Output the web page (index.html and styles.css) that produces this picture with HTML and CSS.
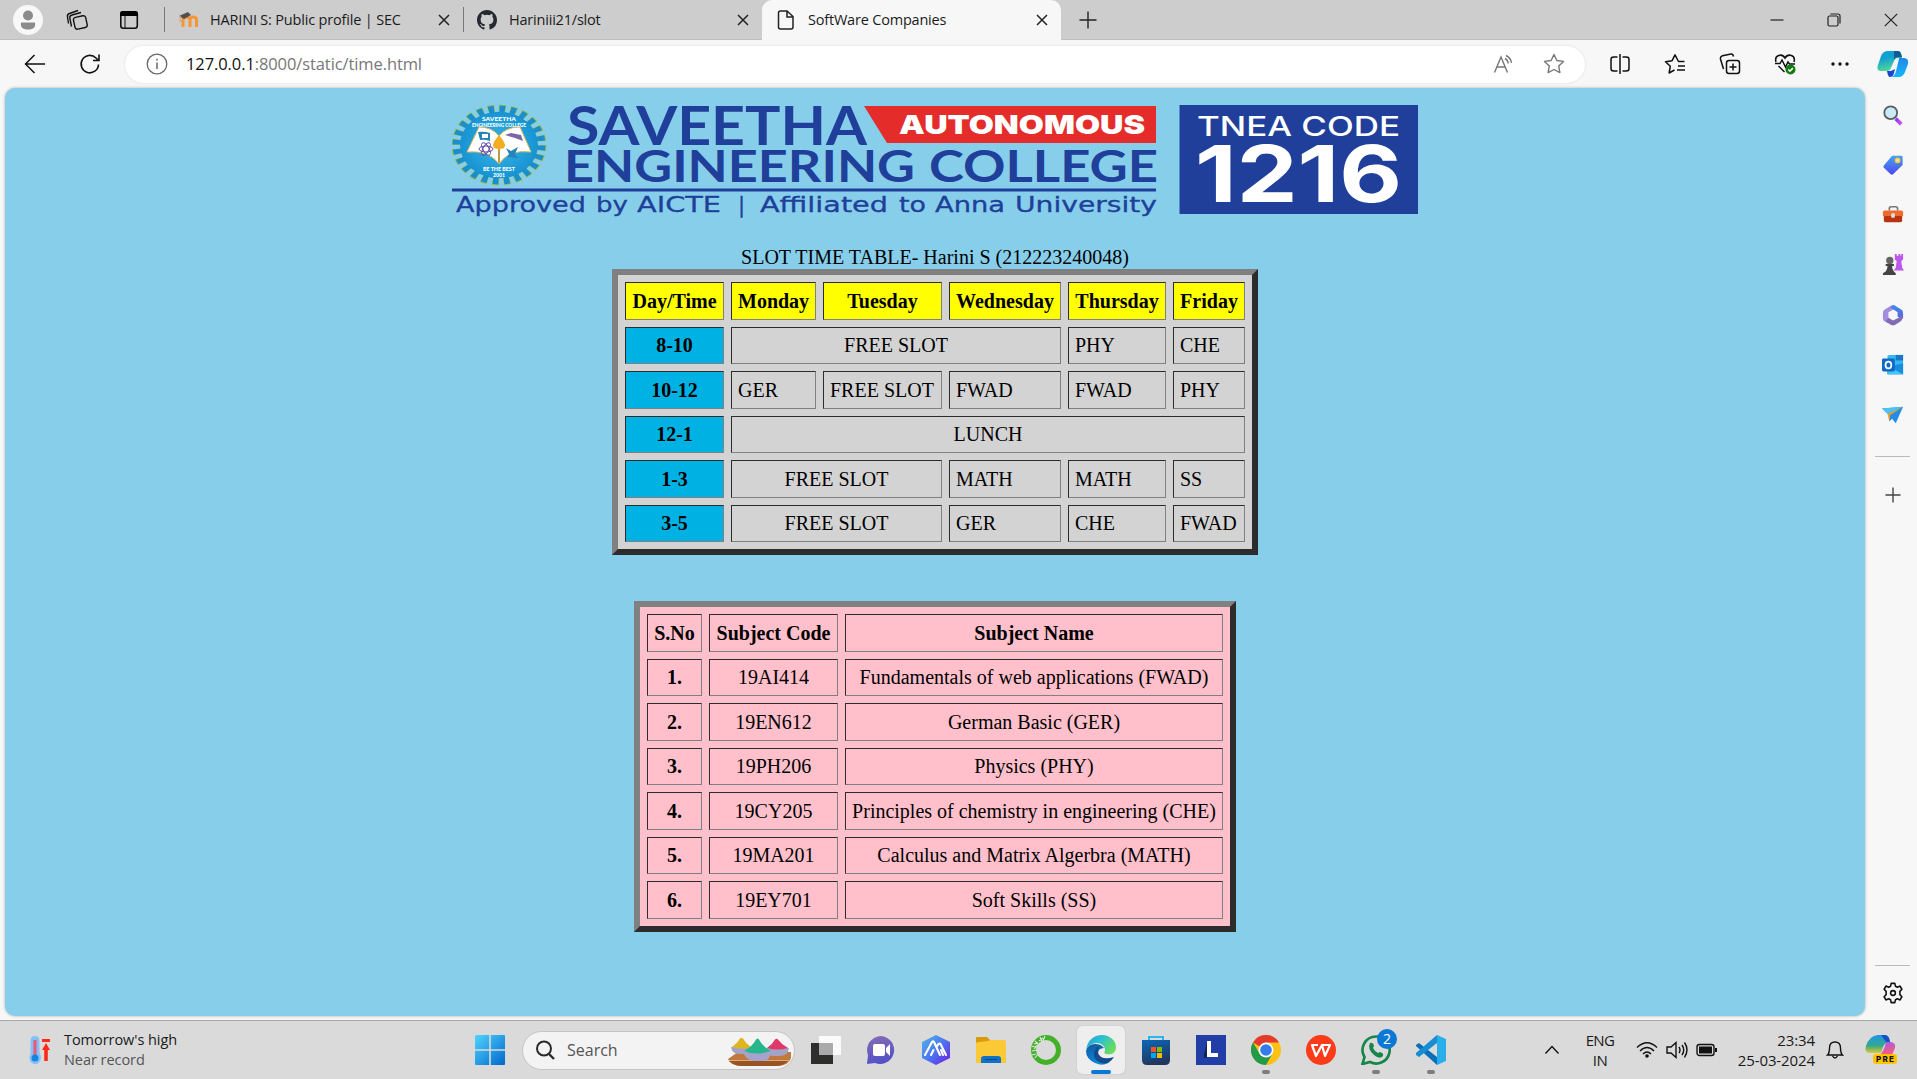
FILE: index.html
```html
<!DOCTYPE html>
<html lang="en">
<head>
<meta charset="utf-8">
<title>SoftWare Companies</title>
<link rel="stylesheet" href="styles.css">
</head>
<body>
<div class="desktop">
<header class="tabbar">
  <div class="tools">
    <svg class="avatar" viewBox="0 0 30 30"><circle cx="15" cy="15" r="15" fill="#f8f8f8"/><circle cx="15" cy="10.5" r="5" fill="#8b8b8b"/><path d="M8 17.5h14c1 6-3 7-7 7s-8-1-7-7z" fill="#8b8b8b"/></svg>
    <svg class="i22" viewBox="0 0 22 22" fill="none" stroke="#111" stroke-width="1.4"><rect x="8" y="7.500" width="12.500" height="12" rx="2.500" transform="rotate(-12 14 13)"/><path d="M5.500 17.500 3.800 9Q3.500 6.500 6 6l9-2.500M2.500 14.500 1.500 8Q1 5 3.500 4.500L12 1.500"/></svg>
    <svg class="i22" viewBox="0 0 22 22"><rect x="2.800" y="2.800" width="16.500" height="16.500" rx="2.500" fill="none" stroke="#111" stroke-width="1.600"/><path d="M2 7V5Q2 2 5 2h12q3 0 3 3v2z"/><path d="M7 7v12" stroke="#111"/></svg>
  </div>
  <div class="tab">
    <svg class="fav" viewBox="0 0 20 20"><path d="M5 17V10q0-3 3.500-3t3.500 3v7M12 10q0-3 3.300-3T18.500 10v7" fill="none" stroke="#f79535" stroke-width="3"/><path d="M1 6 10 2l3 3-7 4z" fill="#51504f"/><path d="M2.500 6 2 12" stroke="#d99b67"/></svg>
    <span class="t1">HARINI S: Public profile | SEC</span>
    <svg class="x" viewBox="0 0 12 12"><path d="M1 1l10 10M11 1 1 11"/></svg>
  </div>
  <div class="tab">
    <svg class="fav" viewBox="0 0 16 16" fill="#24292f"><path d="M8 0C3.580 0 0 3.580 0 8c0 3.540 2.290 6.530 5.470 7.590.4.070.55-.17.55-.38 0-.19-.01-.82-.01-1.490-2.010.37-2.530-.49-2.690-.94-.09-.23-.48-.94-.82-1.130-.28-.15-.68-.52-.01-.53.63-.01 1.080.58 1.230.82.72 1.210 1.870.87 2.330.66.07-.52.28-.87.51-1.070-1.780-.2-3.640-.89-3.640-3.950 0-.87.31-1.590.82-2.150-.08-.2-.36-1.020.08-2.120 0 0 .67-.21 2.200.82a7.500 7.500 0 0 1 4 0c1.530-1.040 2.200-.82 2.200-.82.44 1.100.16 1.920.08 2.120.51.56.82 1.270.82 2.150 0 3.070-1.870 3.750-3.650 3.950.29.25.54.73.54 1.480 0 1.070-.01 1.930-.01 2.200 0 .21.150.46.55.38A8 8 0 0 0 16 8c0-4.420-3.580-8-8-8z"/></svg>
    <span class="t2">Hariniii21/slot</span>
    <svg class="x" viewBox="0 0 12 12"><path d="M1 1l10 10M11 1 1 11"/></svg>
  </div>
  <div class="tab active">
    <svg class="fav" viewBox="0 0 20 20" fill="none" stroke="#222" stroke-width="1.500"><path d="M4.500 1h6.500l6 5.500V17q0 2-2 2H4.500q-2 0-2-2V3q0-2 2-2zM11 1v6h6"/></svg>
    <span class="t3">SoftWare Companies</span>
    <svg class="x" viewBox="0 0 12 12"><path d="M1 1l10 10M11 1 1 11"/></svg>
  </div>
  <svg class="newtab" viewBox="0 0 18 18"><path d="M9 .5v17M.5 9h17" stroke="#222" stroke-width="1.400"/></svg>
  <div class="winbtns">
    <svg viewBox="0 0 14 14"><path d="M.5 7h13"/></svg>
    <svg viewBox="0 0 14 14"><rect x="1" y="3" width="10" height="10" rx="1.500"/><path d="M3.500 1H11q2 0 2 2v7.500"/></svg>
    <svg viewBox="0 0 14 14"><path d="M.8.8l12.400 12.400M13.200.8.8 13.200"/></svg>
  </div>
</header>

<nav class="toolbar">
  <svg class="back" viewBox="0 0 22 22"><path d="M21 11H2M10.500 2 1.500 11l9 9"/></svg>
  <svg class="reload" viewBox="0 0 22 22"><path d="M19.500 11.500a8.700 8.700 0 1 1-2.500-6.500l2.300 2.300M20 1.500v6h-6"/></svg>
  <div class="address">
    <svg class="info" viewBox="0 0 22 22"><circle cx="11" cy="11" r="9.800" fill="none" stroke="#666" stroke-width="1.300"/><path d="M11 9.500V16M11 5.800v1.600" stroke="#666" stroke-width="1.500"/></svg>
    <span class="url"><b>127.0.0.1</b>:8000/static/time.html</span>
    <svg class="i22" viewBox="0 0 22 22" fill="none" stroke="#777" stroke-width="1.400"><path d="M1.500 19.500 8 4l6.500 15.500M4 14h8M12 5.500q3 1.500 3.200 5M13 2.500q5 2.500 5.500 7.500"/></svg>
    <svg class="i22" viewBox="0 0 22 22" fill="none" stroke="#777" stroke-width="1.400"><path d="m11 1.500 2.900 6 6.600.9-4.800 4.600 1.200 6.600L11 16.500l-5.900 3.100 1.200-6.600L1.500 8.400l6.600-.9z" stroke-linejoin="round"/></svg>
  </div>
  <div class="actions">
    <svg viewBox="0 0 22 22"><path d="M8.500 4H4.500Q2 4 2 6.500v9Q2 18 4.500 18h4M13.500 4h4q2.500 0 2.500 2.500v9q0 2.500-2.500 2.500h-4M11 1v20"/></svg>
    <svg viewBox="0 0 22 22"><path d="M20.500 8.500h-6L11 1.800 8.100 7.700l-6.600 1 4.800 4.600L5.100 20l5.400-3M14 13h7M13 17h8" stroke-linejoin="round"/></svg>
    <svg viewBox="0 0 22 22"><rect x="7.500" y="7.500" width="13" height="13" rx="2.500"/><path d="M14 10.500v7M10.500 14h7M4.500 16 1.500 6q-.5-2.500 2-3.300L12 1q2-.2 2.500 2.500"/></svg>
    <svg viewBox="0 0 22 22"><path d="M2 9C0 2 8 0 11 5c3-5 11-3 9 4M1 10.500h5l2-3.500 3.500 7 2.500-5 1.500 2H21M4.500 13l6 6"/><circle cx="16.500" cy="16.500" r="5" fill="#107c10" stroke="none"/><path d="m14.300 16.500 1.600 1.600 3-3" stroke="#fff"/></svg>
    <svg viewBox="0 0 22 22"><g fill="#111" stroke="none"><circle cx="4" cy="11" r="1.700"/><circle cx="11" cy="11" r="1.700"/><circle cx="18" cy="11" r="1.700"/></g></svg>
  </div>
  <svg class="copilot" viewBox="0 0 32 30">
    <defs><linearGradient id="ca" x2=".3" y2="1"><stop stop-color="#0aa3d8"/><stop offset=".4" stop-color="#12a0cf"/><stop offset="1" stop-color="#50d69a"/></linearGradient><linearGradient id="cb" x2="0" y2="1"><stop stop-color="#2286e8"/><stop offset="1" stop-color="#14b8fb"/></linearGradient></defs>
    <path d="M14 2h7q3 0 3 4l1 3h-4q-3 0-4 3l-3 7q-1 3-4 3H4q-5 0-3-6L4 7q2-5 7-5z" fill="url(#ca)"/><path d="M17 2h4q3 0 4 6h-4q-3 0-4 3z" fill="#125c91"/><path d="M22 9h5q5 0 4 6l-3 8q-2 5-6 5h-8q4-1 5-6l2-8q1-4 1-5z" fill="url(#cb)"/><path d="M10 22h4l4-2-1 4q-1 4-4 4-2 0-3-6z" fill="#1645d8"/>
  </svg>
</nav>

<main class="page">
  <svg class="banner" viewBox="0 0 970 116">
    <defs><radialGradient id="gb"><stop stop-color="#39b7e8"/><stop offset="1" stop-color="#1793d2"/></radialGradient></defs>
    <g transform="translate(47 41) scale(1 .85)"><circle r="41" fill="none" stroke="#a1bd4d" stroke-width="13" pathLength="48" stroke-dasharray="1.200 .8"/><circle r="41" fill="none" stroke="#188fcf" stroke-width="11" pathLength="48" stroke-dasharray="1 1" stroke-dashoffset="-.1"/><circle r="39" fill="url(#gb)"/></g>
    <path d="M27 23q13 0 20 9 7-9 21-9l11 25q-22-3-32 12-10-14-32-12z" fill="#fff" stroke="#d9ba61"/>
    <g fill="none" stroke="#6048a5"><ellipse cx="34" cy="45" rx="7" ry="3"/><ellipse cx="34" cy="45" rx="7" ry="3" transform="rotate(60 34 45)"/><ellipse cx="34" cy="45" rx="7" ry="3" transform="rotate(120 34 45)"/></g>
    <path d="M26 28q6-1 12 1v8q-6-2-10-1zM54 44l5 3 7-4-3 7 3 4-11-1 2-3z" fill="#2585ba"/><path d="M30 30h6v4h-6z" fill="#fff"/><path d="m53 31 6-2 10 2 2 6-8-3z" fill="#7b67a8"/>
    <path d="M47 31q12 14 0 14-12 0 0-14z" fill="#f4ad20"/><path d="M47 45v14" stroke="#bd9c42" stroke-width="2"/>
    <g font-family="Lato, sans-serif" font-weight="900" fill="#fff"><text x="30" y="17" font-size="6" textLength="34" lengthAdjust="spacingAndGlyphs">SAVEETHA</text><text x="20" y="22.500" font-size="5" textLength="54" lengthAdjust="spacingAndGlyphs">ENGINEERING COLLEGE</text><text x="31" y="67" font-size="5" textLength="32" lengthAdjust="spacingAndGlyphs">BE THE BEST</text><text x="41" y="72.500" font-size="5" textLength="12" lengthAdjust="spacingAndGlyphs">2001</text></g>
    <g font-family="Lato, sans-serif" font-weight="700" fill="#203f9a"><text x="115" y="40.500" font-size="53" textLength="300" lengthAdjust="spacingAndGlyphs">SAVEETHA</text><text x="112" y="77.500" font-size="43" textLength="351" lengthAdjust="spacingAndGlyphs">ENGINEERING</text><text x="477" y="77.500" font-size="43" textLength="229" lengthAdjust="spacingAndGlyphs">COLLEGE</text></g>
    <path d="M412 2h292v37H435z" fill="#e42d2b"/>
    <text x="447" y="29.500" font-family="Inter, sans-serif" font-weight="900" font-size="26" fill="#fff" textLength="246" lengthAdjust="spacingAndGlyphs">AUTONOMOUS</text>
    <path d="M0 84.500h704v3H0z" fill="#203f9a"/>
    <g class="tagline"><text x="4" y="108" textLength="130" lengthAdjust="spacingAndGlyphs">Approved</text><text x="144" y="108" textLength="32" lengthAdjust="spacingAndGlyphs">by</text><text x="185" y="108" textLength="84" lengthAdjust="spacingAndGlyphs">AICTE</text><text x="286" y="108">|</text><text x="308" y="108" textLength="128" lengthAdjust="spacingAndGlyphs">Affiliated</text><text x="447" y="108" textLength="27" lengthAdjust="spacingAndGlyphs">to</text><text x="483" y="108" textLength="70" lengthAdjust="spacingAndGlyphs">Anna</text><text x="563" y="108" textLength="142" lengthAdjust="spacingAndGlyphs">University</text></g>
    <path d="M727.500 1H966v109H727.500z" fill="#203f9a"/>
    <g font-family="Inter, sans-serif" fill="#fff"><text x="745" y="31.500" font-size="26.500" font-weight="500" textLength="203" lengthAdjust="spacingAndGlyphs">TNEA CODE</text><text x="743" y="98" font-size="79" font-weight="700" textLength="207" lengthAdjust="spacingAndGlyphs">1216</text></g>
  </svg>

  <table class="slots">
    <caption>SLOT TIME TABLE- Harini S (212223240048)</caption>
    <colgroup><col class="c99"><col class="c85"><col class="c119"><col class="c112"><col class="c98"><col class="c72"></colgroup>
    <tr class="days"><th>Day/Time</th><th>Monday</th><th>Tuesday</th><th>Wednesday</th><th>Thursday</th><th>Friday</th></tr>
    <tr><th>8-10</th><td class="mid" colspan="3">FREE SLOT</td><td>PHY</td><td>CHE</td></tr>
    <tr><th>10-12</th><td>GER</td><td>FREE SLOT</td><td>FWAD</td><td>FWAD</td><td>PHY</td></tr>
    <tr><th>12-1</th><td class="mid" colspan="5">LUNCH</td></tr>
    <tr><th>1-3</th><td class="mid" colspan="2">FREE SLOT</td><td>MATH</td><td>MATH</td><td>SS</td></tr>
    <tr><th>3-5</th><td class="mid" colspan="2">FREE SLOT</td><td>GER</td><td>CHE</td><td>FWAD</td></tr>
  </table>

  <table class="subjects">
    <colgroup><col class="c55"><col class="c129"><col class="c378"></colgroup>
    <tr><th>S.No</th><th>Subject Code</th><th>Subject Name</th></tr>
    <tr><th>1.</th><td>19AI414</td><td>Fundamentals of web applications (FWAD)</td></tr>
    <tr><th>2.</th><td>19EN612</td><td>German Basic (GER)</td></tr>
    <tr><th>3.</th><td>19PH206</td><td>Physics (PHY)</td></tr>
    <tr><th>4.</th><td>19CY205</td><td>Principles of chemistry in engineering (CHE)</td></tr>
    <tr><th>5.</th><td>19MA201</td><td>Calculus and Matrix Algerbra (MATH)</td></tr>
    <tr><th>6.</th><td>19EY701</td><td>Soft Skills (SS)</td></tr>
  </table>
</main>

<aside class="sidebar">
  <svg viewBox="0 0 24 24"><defs><linearGradient id="pk" x2="1"><stop stop-color="#7b3ff2"/><stop offset="1" stop-color="#e14bf5"/></linearGradient></defs><path d="m15 16 6 6" stroke="url(#pk)" stroke-width="4"/><circle cx="9.500" cy="9.500" r="7" fill="#c8e9fb" stroke="#5d5d5d" stroke-width="2"/></svg>
  <svg viewBox="0 0 24 24"><defs><linearGradient id="tg" x2="0" y2="1"><stop stop-color="#49a1f0"/><stop offset="1" stop-color="#4c49ee"/></linearGradient></defs><path d="M11 2h10q1.500 0 1.500 1.500V12L12 22q-1 1-2.500 0L2 15q-1-1 0-2.500z" fill="url(#tg)"/><circle cx="17" cy="7" r="2.300" fill="#dce6ff" stroke="#f7cc28" stroke-width="1.600"/></svg>
  <svg viewBox="0 0 24 24"><path d="M8 7V5q0-2 2-2h5q2 0 2 2v2" fill="none" stroke="#777" stroke-width="1.800"/><path d="M3 7h18q2 0 2 2v4H1V9q0-2 2-2z" fill="#ec6b2d"/><path d="M2 13h20v5q0 2-2 2H4q-2 0-2-2z" fill="#b7340f"/><rect x="10" y="10" width="4" height="5" rx="1" fill="#dedede"/></svg>
  <svg viewBox="0 0 24 24"><path d="M14 0h2v2h2V0h2v2h1V0h2v6l-2 2 1 7 2 3H13l2-3 1-7-2-2z" fill="#be57ee"/><circle cx="8.500" cy="7" r="4" fill="#666"/><path d="M4 11h9v2h-2q0 4 2 6l2 2v2H1v-2l3-2q2-2 2-6H4z" fill="#444"/></svg>
  <svg viewBox="0 0 24 24"><defs><linearGradient id="mo" x2="0" y2="1"><stop stop-color="#3d8cec"/><stop offset="1" stop-color="#6562d7"/></linearGradient></defs><path d="M11 1 3 6q-2 1-2 4v6q0 2 2 3l4 2V9l9-5-3-3z" fill="#a28cdd"/><path d="m13 1 8 5q2 1 2 4v6l-6-2V9l-6-4-2-1z" fill="url(#mo)"/><path d="m7 15 5 3 10-5v3q0 2-2 3l-6 4q-2 1-4 0l-6-4z" fill="#806bb9"/><circle cx="12" cy="12" r="4" fill="#f7f7f7"/></svg>
  <svg viewBox="0 0 24 24"><path d="M8 1h14q1 0 1 1v20H6V2z" fill="#35b8f1"/><path d="M15 1h8v6h-8z" fill="#1b75c9"/><path d="m6 14 17-4v12H6z" fill="#168de2"/><path d="m6 13 17 9H7z" fill="#45c6f4"/><rect x="0" y="5" width="14" height="14" rx="1.500" fill="#0e69c7"/><ellipse cx="7" cy="12" rx="3.200" ry="3.700" fill="none" stroke="#fff" stroke-width="1.900"/></svg>
  <svg viewBox="0 0 24 24"><path d="m0 5 23-2-8 18-4-5-3 3-1-8z" fill="#258be8"/><path d="M0 5 23 3 6 11z" fill="#4cc3f3"/><path d="M23 3 6 11l2 8 1-7z" fill="#f1a328"/></svg>
  <hr>
  <svg class="add" viewBox="0 0 18 18"><path d="M9 1.500v15M1.500 9h15" stroke="#444" stroke-width="1.400"/></svg>
  <div class="grow"></div>
  <hr>
  <svg class="gear" viewBox="0 0 24 24" fill="none" stroke="#111" stroke-width="1.700"><path d="m10 1.500-.7 3.200-2 1-3-1.300-2 3.500 2.200 2.300v3.600l-2.200 2.300 2 3.500 3-1.300 2 1 .7 3.200h4l.7-3.200 2-1 3 1.300 2-3.500-2.200-2.300v-3.600l2.200-2.300-2-3.500-3 1.300-2-1-.7-3.200z" stroke-linejoin="round"/><circle cx="12" cy="12" r="2.600"/></svg>
</aside>

<footer class="taskbar">
  <div class="weather">
    <svg viewBox="0 0 24 30"><path d="M2.500 6q0-5 4.500-5t4.500 5v12q2 2 1 7-2 5-6 4-5-1-5-6 0-2 1-4z" fill="#83c2f8"/><path d="M7 5v17" stroke="#e85c78" stroke-width="3.200"/><circle cx="7" cy="23" r="3.500" fill="#1187dd"/><path d="M14 5.500h8" stroke="#ff2a18" stroke-width="3"/><path d="m18 8 4 7h-2.200v11h-3.600V15H14z" fill="#ff2a18"/></svg>
    <div><p>Tomorrow's high</p><p class="dim">Near record</p></div>
  </div>
  <svg class="start" viewBox="0 0 30 30"><defs><linearGradient id="wn" x2="1" y2="1"><stop stop-color="#4fd3ff"/><stop offset="1" stop-color="#0068cb"/></linearGradient></defs><path d="M1 0h13.200v14.200H0V1zM15.800 0H29q1 0 1 1v13.200H15.800zM0 15.800h14.200V30H1q-1 0-1-1zM15.800 15.800H30V29q0 1-1 1H15.800z" fill="url(#wn)"/></svg>
  <div class="search">
    <svg class="lens" viewBox="0 0 20 20"><circle cx="9" cy="8.500" r="7" fill="none" stroke="#2b2b2b" stroke-width="2"/><path d="m14 14 5 5" stroke="#2b2b2b" stroke-width="2.400"/></svg>
    <span>Search</span>
    <svg class="bowls" viewBox="0 0 64 30"><path d="M0 22 10 15h53v6q-2 7-13 8H14Q3 29 0 22z" fill="#bf783d"/><path d="M1 24h59q-5 5-12 5H14q-8 0-13-5z" fill="#975425"/><path d="M1 23.500h60" stroke="#e7ab72"/><path d="M3 10h21q0 7-8 7H11q-7 0-8-7zM38 11h23q-1 8-9 8h-6q-7 0-8-8z" fill="#a4a3c6"/><path d="M4 10Q9 7 12 1.500q1.500-1.500 3 0Q18 7 23 10q-8 3-19 0z" fill="#dfb51f"/><path d="M39 11q5-3 8-8.500 1.500-1.500 3 0Q54 8 60 11q-11 3-21 0z" fill="#e0386b"/><path d="M15 14h29q-2 10-10 10h-8q-9-1-11-10z" fill="#a5a3cd"/><path d="M16 14q8-4 12-11.500 1.500-2 3 0Q35 10 43 14q-14 5-27 0z" fill="#27b68b"/></svg>
  </div>
  <div class="apps">
    <div><svg viewBox="0 0 30 30"><path d="M0 8h22v21H0z" fill="#2e2e2d"/><path d="M8 1h22v19H8z" fill="#fff" opacity=".85"/><path d="M8 8h14v12H8z" fill="#aaa"/></svg></div>
    <div><svg viewBox="0 0 30 30"><defs><linearGradient id="ch" x2=".3" y2="1"><stop stop-color="#886db6"/><stop offset="1" stop-color="#5452c6"/></linearGradient></defs><path d="M15 1a14 14 0 1 1-6 27L1 29l1-9A14 14 0 0 1 15 1z" fill="url(#ch)"/><rect x="7" y="9" width="12" height="12" rx="2" fill="#fff"/><path d="m20 13 4-4v12l-4-4z" fill="#fff"/></svg></div>
    <div><svg viewBox="0 0 30 30"><defs><linearGradient id="hx" x2="1" y2="1"><stop stop-color="#55b4e8"/><stop offset=".5" stop-color="#4a77ef"/><stop offset="1" stop-color="#701be3"/></linearGradient></defs><path d="m15 0 14 7v16l-14 7L1 23V7z" fill="url(#hx)"/><path d="M4 20 11 7q1-1.500 2 0l6 13M10 20l2.500-5M16 11l1.500-2q1-1 2 0L25 20M20 15l2 5" fill="none" stroke="#fff" stroke-width="2.100" stroke-linecap="round" stroke-linejoin="round"/></svg></div>
    <div><svg viewBox="0 0 30 30"><path d="M0 3q0-1 1-1h10l3 3v4H0z" fill="#d89a08"/><path d="M0 9q0-2 3-2l9-1 2-1h14q2 0 2 2v21H0z" fill="#fbc936"/><path d="M5 28v-4q0-3 3-3h14q3 0 3 3v4z" fill="#0f72c6"/><path d="M9 24.500h12" stroke="#074a88"/></svg></div>
    <div><svg viewBox="0 0 30 30"><circle cx="15" cy="15" r="12.500" fill="none" stroke="#42b029" stroke-width="5"/><path d="M4 23 7 19M1 16l5-1M1 11l5 2M4 6l4 4M9 2l2 5M5 19l-4 1M3 14l3-4M7 8 3 9M8 6l4-3M14 1l-2 5" stroke="#dce8da" stroke-width="1.200"/></svg></div>
    <div class="current"><svg viewBox="0 0 30 30"><defs><linearGradient id="ed" x2="1" y2=".5"><stop stop-color="#259fd9"/><stop offset=".5" stop-color="#2dc0d1"/><stop offset="1" stop-color="#68dc5e"/></linearGradient><linearGradient id="ee" x2=".3" y2="1"><stop stop-color="#14589c"/><stop offset="1" stop-color="#0889e2"/></linearGradient></defs><path d="M0 16C1 5 8 0 16 0c8 0 14 6 14 12 0 7-6 8-10 7-3-1-1-2-1-4 0-4-4-7-8-7-6 0-10 4-11 8z" fill="url(#ed)"/><path d="M0 16q2-7 9-7 6 0 9 4-6 0-6 6 1 8 12 8Q17 32 9 28 0 24 0 16z" fill="url(#ee)"/><path d="M14 11q-3 3-2 7 3 8 16 4-5 8-13 6-8-3-7-10 1-6 6-7z" fill="#174a88"/></svg></div>
    <div><svg viewBox="0 0 30 30"><defs><linearGradient id="st" x2=".3" y2="1"><stop stop-color="#0b68b7"/><stop offset="1" stop-color="#21365e"/></linearGradient></defs><path d="M8 7V2h14v5" fill="none" stroke="#28b8ef" stroke-width="2"/><path d="M1 5h28v20q0 5-5 5H6q-5 0-5-5z" fill="url(#st)"/><path d="M10 12h5v5h-5z" fill="#f35325"/><path d="M16 12h5v5h-5z" fill="#81bc06"/><path d="M10 18h5v5h-5z" fill="#05a6f0"/><path d="M16 18h5v5h-5z" fill="#ffba08"/></svg></div>
    <div><svg viewBox="0 0 30 30"><path d="M0 0h30v30H0z" fill="#203da8"/><path d="m11 7-3 12v4l5-1z" fill="#122552"/><path d="M11 6h4v12h7v4H11z" fill="#fff"/></svg></div>
    <div class="run"><svg viewBox="0 0 30 30"><circle cx="15" cy="15" r="15" fill="#fbc116"/><path d="M15 15 2 7.500A15 15 0 0 1 28 7.500H15z" fill="#e33b2e"/><path d="M2 7.500A15 15 0 0 0 15 30l6.500-11.500L15 15 8.500 18.500z" fill="#229a48"/><circle cx="15" cy="15" r="7.500" fill="#fff"/><circle cx="15" cy="15" r="5.800" fill="#347ce9"/></svg></div>
    <div><svg viewBox="0 0 30 30"><circle cx="15" cy="15" r="15" fill="#fc3c18"/><path d="M12 10H6l4 11 6-11 3 11 5-11h-7l-2 2" fill="none" stroke="#fff" stroke-width="2.200" stroke-linejoin="round"/></svg></div>
    <div class="run wa"><svg viewBox="0 0 30 30"><path d="M15 1.500a13.500 13.500 0 1 1-6 25.500l-7.500 2 2-7A13.500 13.500 0 0 1 15 1.500z" fill="none" stroke="#17864c" stroke-width="2.700"/><path d="M9 8q3-1 4 3l-1 2q2 4 5 5l2-1q4 1 3 4-3 4-9-1-7-6-4-12z" fill="#17864c"/></svg><b>2</b></div>
    <div class="run"><svg viewBox="0 0 30 30"><path d="m21 0 9 4v22l-9 4z" fill="#2aaeea"/><path d="m0 10 3-2 18 14v8L0 11z" fill="#0870b8"/><path d="m0 20 3 2L21 8V0L0 18z" fill="#178ed4"/></svg></div>
  </div>
  <div class="tray">
    <svg class="chev" viewBox="0 0 16 10"><path d="m1.500 8.500 6.500-7 6.500 7"/></svg>
    <div class="lang"><p>ENG</p><p>IN</p></div>
    <svg class="net" viewBox="0 0 22 20"><path d="M1 7.500q10-9.500 20 0M4 11q7-7 14 0M7 14q4-4 8 0"/><circle cx="11" cy="16" r="1.800" fill="#111" stroke="none"/></svg>
    <svg class="net" viewBox="0 0 22 20"><path d="M1 7h4l5-4.500v15L5 13H1zM13 7q2 3 0 6M16 5q3.500 5 0 10M18.500 2.500q5 7 0 15"/></svg>
    <svg class="net" viewBox="0 0 22 20"><rect x="1" y="4.500" width="17" height="11" rx="2.500"/><path d="M3 6.500h13v7H3z" fill="#111" stroke="none"/><path d="M20 8v4" stroke-width="2"/></svg>
    <div class="clock"><p>23:34</p><p>25-03-2024</p></div>
    <svg class="bell" viewBox="0 0 18 20"><path d="M1.500 15q2-2 2-7 0-6 5.500-6t5.500 6q0 5 2 7zM6.500 16q2.500 4 5 0"/></svg>
    <svg class="pre" viewBox="0 0 32 32"><defs><linearGradient id="pa" x2="0" y2="1"><stop stop-color="#1c95ec"/><stop offset=".6" stop-color="#35a98b"/><stop offset="1" stop-color="#e0c92a"/></linearGradient><linearGradient id="pb" x2=".2" y2="1"><stop stop-color="#a55bea"/><stop offset="1" stop-color="#fa5b7c"/></linearGradient></defs><path d="M13 1h7q4 0 5 7-5 0-7 5l-2 6H5q-6 0-4-7 3-10 12-11z" fill="url(#pa)"/><path d="M16 1h4q4 0 5 7h-4z" fill="#1751c9"/><path d="M21 8h5q5 1 4 6l-3 7H15q4-4 6-13z" fill="url(#pb)"/><rect x="8" y="20" width="24" height="10" rx="3" fill="#ffc400"/><text x="11" y="28" font-family="Inter, sans-serif" font-size="8" font-weight="800" textLength="18">PRE</text></svg>
  </div>
</footer>
</div>
</body>
</html>
```
FILE: styles.css
```css
* { box-sizing: border-box; }
body { margin: 0; overflow: hidden; font-family: "Open Sans", sans-serif; color: #1b1b1b; }
svg { display: block; flex: none; }
p { margin: 0; }
.desktop {
  width: 1917px; height: 1079px; background: #f7f7f7;
  display: grid; grid-template: 40px 48px 928px 4px 59px / 1865px 52px;
}
.tabbar, .toolbar, .taskbar { grid-column: 1 / 3; display: flex; align-items: center; }

/* Tab strip */
.tabbar { background: #cdcdcd; border-bottom: 1px solid #c0c0c0; height: 40px; }
.tools { width: 164px; padding-left: 13px; display: flex; align-items: center; gap: 23px; }
.avatar { width: 30px; height: 30px; }
.tools .i22:nth-child(3) { margin-left: 7px; }
.i22 { width: 22px; height: 22px; }
.tab {
  width: 299px; height: 40px; padding: 0 13px; display: flex; align-items: center;
  font-size: 14.5px; white-space: nowrap;
}
.tab::before { content: ""; width: 1px; height: 25px; background: #777; margin-left: -13px; }
.tab .fav { margin-left: 13px; }
.tab span { margin-left: 12px; }
.tab .x { margin-left: auto; stroke: #222; }
.tab.active { background: #f7f7f7; border-radius: 10px 10px 0 0; }
.tab.active::before { background: none; }
.fav { width: 20px; height: 20px; }
.x { width: 12px; height: 12px; stroke-width: 1.5; }
.t1 { letter-spacing: -.18px; }
.t2 { letter-spacing: -.2px; }
.t3 { letter-spacing: -.2px; }
.newtab { width: 18px; height: 18px; margin-left: 18px; }
.winbtns { margin-left: auto; margin-right: 19px; display: flex; gap: 43px; }
.winbtns svg { width: 14px; height: 14px; fill: none; stroke: #222; stroke-width: 1.2; }

/* Address row */
.toolbar { height: 48px; padding: 0 8px 0 24px; fill: none; stroke: #111; }
.back { width: 22px; height: 22px; stroke-width: 1.5; }
.reload { width: 22px; height: 22px; margin-left: 33px; stroke-width: 1.6; }
.address {
  margin-left: 24px; width: 1460px; height: 37px; border-radius: 19px; background: #fff;
  box-shadow: 0 0 3px #ddd; display: flex; align-items: center; padding: 0 20px 0 21px; stroke: none;
}
.info { width: 22px; height: 22px; }
.url { margin: 0 auto 0 18px; padding-bottom: 2px; font-size: 16.5px; letter-spacing: -.1px; color: #777; }
.url b { font-weight: 400; color: #111; }
.address .i22 + .i22 { margin-left: 28px; }
.actions { margin-left: 24px; display: flex; gap: 33px; }
.actions svg { width: 22px; height: 22px; stroke-width: 1.5; }
.copilot { width: 32px; height: 30px; margin-left: auto; stroke: none; }

/* Web page */
.page {
  grid-row: 3; grid-column: 1;
  margin-left: 5px; background: skyblue; border-radius: 10px; overflow: hidden;
  box-shadow: 0 0 3px #aaa; padding-top: 16px; display: flex; flex-direction: column; align-items: center;
  font: 20px/23px "Liberation Serif", serif; color: #000;
}
.banner { width: 970px; height: 116px; margin-left: 4px; }
.tagline { font: 21px "DejaVu Sans", sans-serif; fill: #203f9a; stroke: #203f9a; stroke-width: .3px; }
table {
  table-layout: fixed; border: 6px solid; border-color: #808080 #2c2c2c #2c2c2c #808080;
  border-spacing: 7px; border-collapse: separate; white-space: nowrap;
}
caption { height: 23px; }
th, td { padding: 0 6px; border: 1px solid; border-color: #2c2c2c #808080 #808080 #2c2c2c; }
tr { height: 37px; }
tr:nth-child(odd) { height: 38px; }
.slots { width: 646px; background: lightgray; margin-top: 26px; }
.slots th { background: #00b1e3; }
.slots .days th { background: yellow; }
.mid, .subjects td { text-align: center; }
.subjects { width: 602px; background: pink; margin-top: 46px; }
.c99 { width: 99px; } .c85 { width: 85px; } .c119 { width: 119px; } .c112 { width: 112px; }
.c98 { width: 98px; } .c72 { width: 72px; } .c55 { width: 55px; } .c129 { width: 129px; } .c378 { width: 378px; }

/* Edge sidebar */
.sidebar { grid-row: 3; grid-column: 2; display: flex; flex-direction: column; align-items: center; padding: 16px 0 12px 3px; }
.sidebar svg { width: 22px; height: 22px; margin-bottom: 28px; }
.sidebar hr { width: 35px; height: 1px; border: 0; background: #bbb; margin: 2px 0 29px; flex: none; }
.sidebar .add { width: 18px; height: 18px; margin: 0; }
.grow { flex: 1; }
.sidebar hr + .gear { margin: -13px 0 0; }

/* Taskbar */
.taskbar { grid-row: 5; background: #dadada; border-top: 1px solid #a8a8a8; }
.weather { width: 475px; padding-left: 28px; display: flex; align-items: center; gap: 12px; font-size: 14.5px; line-height: 20px; letter-spacing: -.05px; }
.weather svg { width: 24px; height: 32px; }
.dim { color: #555; }
.start { width: 30px; height: 30px; }
.search {
  width: 273px; height: 39px; margin-left: 17px; border-radius: 20px; background: #f3f3f3;
  border: 1px solid #c4c4c4; display: flex; align-items: center; padding: 0 2px 0 12px; font-size: 16px; color: #555;
}
.lens { width: 20px; height: 20px; }
.search span { margin: 0 auto 0 12px; }
.bowls { width: 64px; height: 30px; margin-top: 3px; }
.apps { display: flex; gap: 7px; margin-left: 7px; }
.apps div { width: 48px; height: 48px; display: grid; place-items: center; border-radius: 5px; position: relative; }
.apps svg { width: 30px; height: 30px; }
.apps .current { background: #eee; box-shadow: 0 0 1px #999; }
.run::after, .current::after { content: ""; position: absolute; bottom: 0; left: 20px; width: 8px; height: 4px; border-radius: 2px; background: #7c7c7c; }
.current::after { left: 14px; width: 20px; background: #0a78d4; }
.wa b { position: absolute; left: 25px; top: 3px; width: 20px; height: 20px; border-radius: 50%; background: #0a78d4; color: #fff; font: 14px/20px "Open Sans", sans-serif; text-align: center; }
.tray { margin-left: auto; margin-right: 20px; display: flex; align-items: center; font-size: 15px; line-height: 20px; }
.tray svg { fill: none; stroke: #111; stroke-width: 1.4; }
.chev { width: 16px; height: 10px; margin-right: 22px; }
.lang { width: 36px; text-align: center; letter-spacing: -.6px; margin-right: 18px; }
.tray .net { width: 22px; height: 20px; margin-right: 8px; }
.clock { width: 90px; text-align: right; letter-spacing: -.1px; margin-left: -1px; }
.bell { width: 18px; height: 20px; margin: 0 21px 0 11px; }
.tray .pre { width: 32px; height: 32px; stroke: none; }
.tray .pre text { fill: #111; }
```
